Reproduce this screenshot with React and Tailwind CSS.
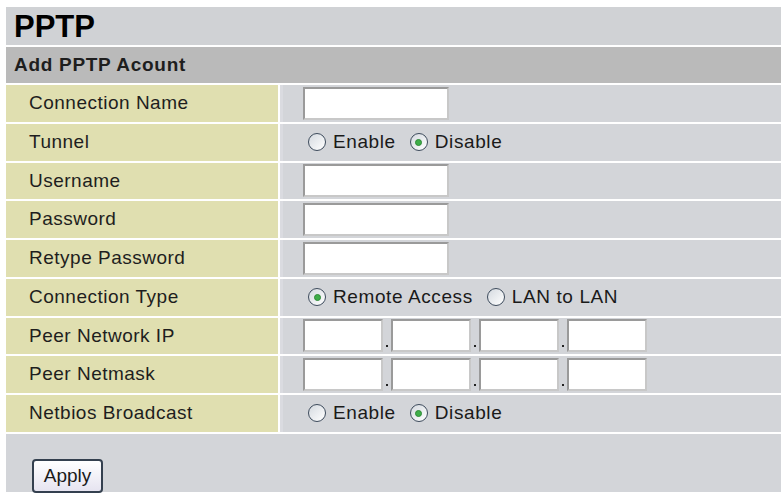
import React from "react";

const font = { fontFamily: '"Liberation Sans", Arial, sans-serif' };

function TextBox() {
  return (
    <div className="w-[146px] h-[33px] bg-white border-2 border-t-[#9a9a9a] border-l-[#9a9a9a] border-r-[#c8c8c8] border-b-[#c8c8c8]" />
  );
}

function Radio({ checked, label }) {
  return (
    <div className="flex items-center mr-[14px]">
      <span className="w-[18px] h-[18px] rounded-full border-[1.5px] border-[#3d4b5c] bg-gradient-to-br from-[#d5dae0] to-white flex items-center justify-center mr-[7px]">
        {checked && <span className="w-[7px] h-[7px] rounded-full bg-[#3fae49] border border-[#2f8a37]" />}
      </span>
      <span className="text-[19px] text-[#1a1a1a] tracking-[0.6px]">{label}</span>
    </div>
  );
}

function IP() {
  return (
    <div className="flex items-end">
      {[0, 1, 2, 3].map((i) => (
        <React.Fragment key={i}>
          <div className="w-[80px] h-[33px] bg-white border-2 border-t-[#9a9a9a] border-l-[#9a9a9a] border-r-[#c8c8c8] border-b-[#c8c8c8]" />
          {i < 3 && (
            <span className="w-[8px] flex justify-center pb-[5px]">
              <span className="w-[2px] h-[2px] bg-[#222]" />
            </span>
          )}
        </React.Fragment>
      ))}
    </div>
  );
}

function Radios({ children }) {
  return <div className="flex pl-[5px]">{children}</div>;
}

const rows = [
  ["Connection Name", <TextBox />],
  ["Tunnel", <Radios><Radio label="Enable" /><Radio checked label="Disable" /></Radios>],
  ["Username", <TextBox />],
  ["Password", <TextBox />],
  ["Retype Password", <TextBox />],
  ["Connection Type", <Radios><Radio checked label="Remote Access" /><Radio label="LAN to LAN" /></Radios>],
  ["Peer Network IP", <IP />],
  ["Peer Netmask", <IP />],
  ["Netbios Broadcast", <Radios><Radio label="Enable" /><Radio checked label="Disable" /></Radios>],
];

export default function App() {
  return (
    <div className="w-[784px] h-[501px] bg-white pt-[7px] pl-[6px]" style={font}>
      <div className="w-[775px] flex flex-col gap-[2px]">
        <div className="h-[38px] bg-[#d0d2d5] flex items-center pl-[8px]">
          <span className="text-[31px] font-bold text-black leading-none">PPTP</span>
        </div>
        <div className="h-[36px] bg-[#bababa] flex items-center pl-[8px]">
          <span className="text-[19px] font-bold text-[#1e1e1e] tracking-[0.7px]">Add PPTP Acount</span>
        </div>
        {rows.map(([label, content]) => (
          <div key={label} className="h-[36.75px] flex gap-[2px]">
            <div className="w-[272px] bg-[#e0dfb0] flex items-center pl-[23px] text-[19px] text-[#1e1e1e] tracking-[0.5px]">
              {label}
            </div>
            <div className="flex-1 bg-[#d3d5d9] flex items-center pl-[20px] border-l-[3px] border-[#dadbe0]">
              {content}
            </div>
          </div>
        ))}
        <div className="h-[58px] bg-[#d3d5d9] pl-[26px] pt-[25px]">
          <button className="w-[71px] h-[34px] rounded-[4px] border-2 border-[#34404f] bg-gradient-to-b from-white to-[#e6e4f0] text-[19px] text-[#1a1a1a] flex items-center justify-center">
            Apply
          </button>
        </div>
      </div>
    </div>
  );
}
